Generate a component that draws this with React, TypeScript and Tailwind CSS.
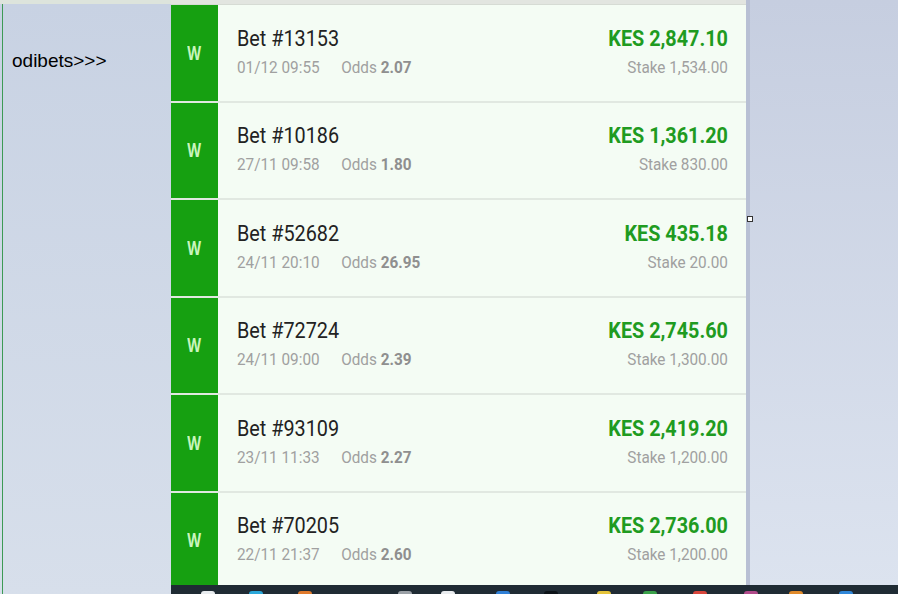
const bets = [
  { id: "13153", date: "01/12 09:55", odds: "2.07", amount: "2,847.10", stake: "1,534.00" },
  { id: "10186", date: "27/11 09:58", odds: "1.80", amount: "1,361.20", stake: "830.00" },
  { id: "52682", date: "24/11 20:10", odds: "26.95", amount: "435.18", stake: "20.00" },
  { id: "72724", date: "24/11 09:00", odds: "2.39", amount: "2,745.60", stake: "1,300.00" },
  { id: "93109", date: "23/11 11:33", odds: "2.27", amount: "2,419.20", stake: "1,200.00" },
  { id: "70205", date: "22/11 21:37", odds: "2.60", amount: "2,736.00", stake: "1,200.00" },
];

const trayIcons = [
  { x: 37, c: "bg-[#e8ecef]" },
  { x: 85, c: "bg-[#2aa7d9]" },
  { x: 134, c: "bg-[#e07a2c]" },
  { x: 234, c: "bg-[#9aa0a6]" },
  { x: 277, c: "bg-[#e9ecef]" },
  { x: 332, c: "bg-[#2f7fd6]" },
  { x: 380, c: "bg-[#0d1318]" },
  { x: 433, c: "bg-[#e5c43a]" },
  { x: 479, c: "bg-[#3aa14a]" },
  { x: 529, c: "bg-[#d8453b]" },
  { x: 580, c: "bg-[#b04a8a]" },
  { x: 625, c: "bg-[#e08a2a]" },
  { x: 675, c: "bg-[#2f86d8]" },
];

function BetRow({ bet }: { bet: (typeof bets)[number] }) {
  return (
    <div className="flex h-[97.5px] shrink-0 border-b-2 border-[#e1e8e1]">
      <div className="flex w-[47px] items-center justify-center bg-[#16a011]">
        <span className="scale-x-75 text-[19px] font-bold text-[#c9f5bd]">W</span>
      </div>
      <div className="flex flex-1 items-center justify-between pl-[19px] pr-[18px] font-['Roboto',sans-serif]">
        <div className="origin-left scale-x-[0.9]">
          <div className="text-[22px] leading-[26px] text-[#222]">Bet #{bet.id}</div>
          <div className="mt-[2px] flex gap-[24px] text-[17px] leading-[26px] text-[#a0a0a0]">
            <span>{bet.date}</span>
            <span>
              Odds <span className="font-bold text-[#8f8f8f]">{bet.odds}</span>
            </span>
          </div>
        </div>
        <div className="origin-right scale-x-[0.9] text-right">
          <div className="text-[22px] font-bold leading-[26px] text-[#1f9b21]">KES {bet.amount}</div>
          <div className="mt-[2px] text-[17px] leading-[26px] text-[#a0a0a0]">Stake {bet.stake}</div>
        </div>
      </div>
    </div>
  );
}

export default function App() {
  return (
    <div className="flex h-[594px] w-[898px] overflow-hidden bg-[#c9d1e2]">
      <div className="flex w-[171px] shrink-0 flex-col">
        <div className="h-[4px] bg-[#dde4dc]" />
        <div className="flex flex-1 bg-gradient-to-b from-[#c8d2e3] to-[#d7dfeb] pl-[2px]">
          <div className="w-px bg-[#3d9a55]" />
          <p className="pl-[9px] pt-[46px] font-['Liberation_Sans',Arial,sans-serif] text-[19px] leading-[22px] text-black">
            odibets&gt;&gt;&gt;
          </p>
        </div>
      </div>

      <div className="flex flex-1 flex-col">
        <div className="flex min-h-0 flex-1">
          <div className="flex w-[575px] shrink-0 flex-col">
            <div className="h-[5px] shrink-0 border-b border-[#d6dbd4] bg-[#e2e5e0]" />
            <div className="flex flex-1 flex-col overflow-hidden bg-[#f4fcf4]">
              {bets.map((b) => (
                <BetRow key={b.id} bet={b} />
              ))}
            </div>
          </div>
          <div className="relative w-[4px] shrink-0 bg-[#b8c0d4]">
            <div className="absolute left-[1px] top-[216px] h-[6px] w-[6px] border border-[#333] bg-white" />
          </div>
          <div className="flex-1 bg-gradient-to-b from-[#c6cee0] to-[#dce3ef]" />
        </div>
        <div className="relative h-[9px] shrink-0 bg-[#1f2b34]">
          {trayIcons.map((t) => (
            <span
              key={t.x}
              className={`absolute bottom-0 h-[3px] w-[14px] rounded-t-full ${t.c}`}
              style={{ left: t.x - 7 }}
            />
          ))}
        </div>
      </div>
    </div>
  );
}
